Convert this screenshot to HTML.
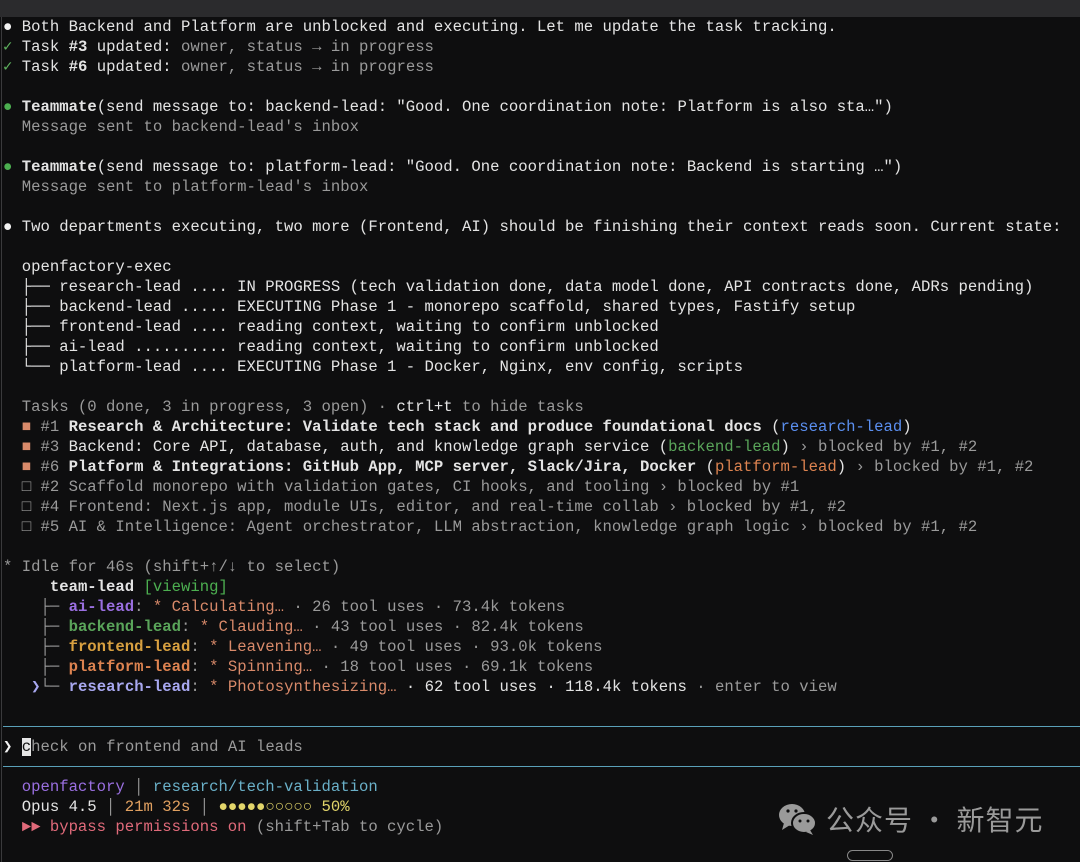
<!DOCTYPE html>
<html><head><meta charset="utf-8"><style>
html,body{margin:0;padding:0;background:#0e0e0f;width:1080px;height:862px;overflow:hidden;position:relative}
.top{position:absolute;left:0;top:0;width:1080px;height:17px;background:#2b2b2d}
.lb{position:absolute;left:1px;top:17px;width:1px;height:845px;background:#3a3a3c}
pre{position:absolute;left:3px;top:17px;margin:0;font-family:"Liberation Mono","DejaVu Sans Mono",monospace;font-size:15.62px;line-height:20px;color:#e4e4e4;white-space:pre}
.d{color:#9a9a9a}.b{font-weight:bold}
.g{color:#5fb35f}.w{color:#f2f2f2}
.o{color:#d98a6a}.bl{color:#5b8ff0}
.pu{color:#9a6fe0}.gr{color:#5aa55a}.ye{color:#d8a040}.or{color:#dd8350}.la{color:#a8a8f0}
.te{color:#6ab0c8}.ti{color:#e0a060}.yd{color:#e2d56a}.pk{color:#e06a7a}.vg{color:#4caf50}
.sep{position:absolute;left:3px;width:1077px;height:1px;background:#5aa0b8}
.cur{background:#e6e6e6;color:#111}
.wm{position:absolute;left:826px;top:799px;font-family:"Noto Sans CJK SC",sans-serif;font-size:28px;color:#9a9a9a;letter-spacing:1px}
.pill{position:absolute;left:847px;top:850px;width:44px;height:9px;border:1.5px solid #888;border-radius:6px}
</style></head><body>
<div class="top"></div><div class="lb"></div>
<pre><span class="w">●</span> Both Backend and Platform are unblocked and executing. Let me update the task tracking.
<span class="g">✓</span> Task <b>#3</b> updated: <span class="d">owner, status → in progress</span>
<span class="g">✓</span> Task <b>#6</b> updated: <span class="d">owner, status → in progress</span>

<span class="vg">●</span> <b>Teammate</b>(send message to: backend-lead: "Good. One coordination note: Platform is also sta…")
  <span class="d">Message sent to backend-lead's inbox</span>

<span class="vg">●</span> <b>Teammate</b>(send message to: platform-lead: "Good. One coordination note: Backend is starting …")
  <span class="d">Message sent to platform-lead's inbox</span>

<span class="w">●</span> Two departments executing, two more (Frontend, AI) should be finishing their context reads soon. Current state:

  openfactory-exec
  ├── research-lead .... IN PROGRESS (tech validation done, data model done, API contracts done, ADRs pending)
  ├── backend-lead ..... EXECUTING Phase 1 - monorepo scaffold, shared types, Fastify setup
  ├── frontend-lead .... reading context, waiting to confirm unblocked
  ├── ai-lead .......... reading context, waiting to confirm unblocked
  └── platform-lead .... EXECUTING Phase 1 - Docker, Nginx, env config, scripts

  <span class="d">Tasks (0 done, 3 in progress, 3 open) · </span>ctrl+t<span class="d"> to hide tasks</span>
  <span class="o">■</span> <span class="d">#1</span> <b>Research &amp; Architecture: Validate tech stack and produce foundational docs</b> (<span class="bl">research-lead</span>)
  <span class="o">■</span> <span class="d">#3</span> Backend: Core API, database, auth, and knowledge graph service (<span class="gr">backend-lead</span>) <span class="d">› blocked by #1, #2</span>
  <span class="o">■</span> <span class="d">#6</span> <b>Platform &amp; Integrations: GitHub App, MCP server, Slack/Jira, Docker</b> (<span class="or">platform-lead</span>) <span class="d">› blocked by #1, #2</span>
  <span class="d">□ #2 Scaffold monorepo with validation gates, CI hooks, and tooling › blocked by #1</span>
  <span class="d">□ #4 Frontend: Next.js app, module UIs, editor, and real-time collab › blocked by #1, #2</span>
  <span class="d">□ #5 AI &amp; Intelligence: Agent orchestrator, LLM abstraction, knowledge graph logic › blocked by #1, #2</span>

<span class="d">* Idle for 46s (shift+↑/↓ to select)</span>
     <b>team-lead</b> <span class="vg">[viewing]</span>
    <span class="d">├─</span> <b class="pu">ai-lead</b><span class="d">:</span> <span class="o">* Calculating…</span><span class="d"> · 26 tool uses · 73.4k tokens</span>
    <span class="d">├─</span> <b class="gr">backend-lead</b><span class="d">:</span> <span class="o">* Clauding…</span><span class="d"> · 43 tool uses · 82.4k tokens</span>
    <span class="d">├─</span> <b class="ye">frontend-lead</b><span class="d">:</span> <span class="o">* Leavening…</span><span class="d"> · 49 tool uses · 93.0k tokens</span>
    <span class="d">├─</span> <b class="or">platform-lead</b><span class="d">:</span> <span class="o">* Spinning…</span><span class="d"> · 18 tool uses · 69.1k tokens</span>
   <span class="la">❯</span><span class="d">└─</span> <b class="la">research-lead</b><span class="d">:</span> <span class="o">* Photosynthesizing…</span> · 62 tool uses · 118.4k tokens <span class="d">· enter to view</span>


<span class="w">❯</span> <span class="cur">c</span><span class="d">heck on frontend and AI leads</span>

  <span class="pu">openfactory</span> <span class="d">│</span> <span class="te">research/tech-validation</span>
  Opus 4.5 <span class="d">│</span> <span class="ti">21m 32s</span> <span class="d">│</span> <span class="yd">●●●●●○○○○○ 50%</span>
  <span class="pk">►► bypass permissions on</span> <span class="d">(shift+Tab to cycle)</span></pre>
<div class="sep" style="top:726px"></div>
<div class="sep" style="top:766px"></div>
<svg style="position:absolute;left:778px;top:802px" width="40" height="34" viewBox="0 0 40 34">
<ellipse cx="14" cy="13" rx="13" ry="11" fill="#9a9a9a"/>
<path d="M6 21 L4 28 L12 23Z" fill="#9a9a9a"/>
<ellipse cx="26" cy="21" rx="12" ry="10" fill="#9a9a9a" stroke="#0e0e0f" stroke-width="2"/>
<path d="M32 28 L35 33 L28 30Z" fill="#9a9a9a"/>
<circle cx="10" cy="9" r="1.6" fill="#0e0e0f"/><circle cx="18" cy="9" r="1.6" fill="#0e0e0f"/>
<circle cx="22" cy="19" r="1.5" fill="#0e0e0f"/><circle cx="30" cy="19" r="1.5" fill="#0e0e0f"/>
</svg>
<div class="wm">公众号 · 新智元</div>
<div class="pill"></div>
</body></html>
